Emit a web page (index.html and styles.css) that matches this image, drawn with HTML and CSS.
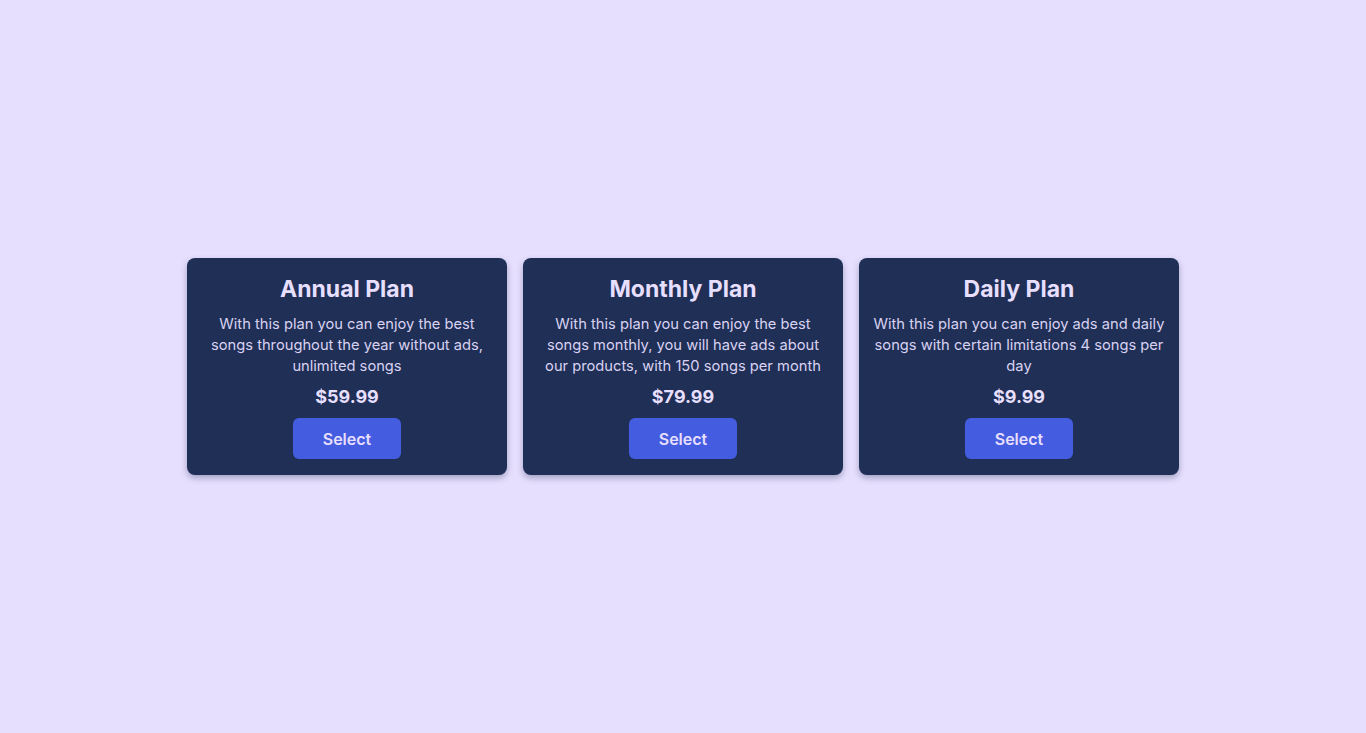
FILE: index.html
```html
<!DOCTYPE html>
<html lang="en">
<head>
<meta charset="utf-8">
<title>Plans</title>
<link rel="stylesheet" href="styles.css">
</head>
<body>
<main class="plans">
  <section class="card">
    <h2 class="title">Annual Plan</h2>
    <p class="desc">With this plan you can enjoy the best songs throughout the year without ads, unlimited songs</p>
    <p class="price">$59.99</p>
    <button class="btn">Select</button>
  </section>
  <section class="card">
    <h2 class="title">Monthly Plan</h2>
    <p class="desc">With this plan you can enjoy the best songs monthly, you will have ads about our products, with 150 songs per month</p>
    <p class="price">$79.99</p>
    <button class="btn">Select</button>
  </section>
  <section class="card">
    <h2 class="title">Daily Plan</h2>
    <p class="desc">With this plan you can enjoy ads and daily songs with certain limitations 4 songs per day</p>
    <p class="price">$9.99</p>
    <button class="btn">Select</button>
  </section>
</main>
</body>
</html>
```
FILE: styles.css
```css
* { box-sizing: border-box; }
html, body { margin: 0; height: 100%; }
body {
  background: #e7dffe;
  font-family: "Inter", "Open Sans", sans-serif;
  display: flex;
  align-items: center;
  justify-content: center;
}
.plans {
  display: flex;
  gap: 16px;
}
.card {
  width: 320px;
  background: #1f2f56;
  border-radius: 8px;
  box-shadow: 0 3px 6px rgba(31, 47, 86, 0.35);
  color: #e7dffe;
  text-align: center;
  padding: 16px 12px;
  display: flex;
  flex-direction: column;
  align-items: center;
}
.title {
  margin: 0;
  font-size: 23px;
  line-height: 30px;
  font-weight: 700;
}
.desc {
  margin: 10px 0 0;
  font-size: 14.7px;
  line-height: 21px;
  font-weight: 400;
  color: #d9d2f2;
}
.price {
  margin: 8px 0 0;
  font-size: 18px;
  line-height: 24px;
  font-weight: 700;
}
.btn {
  flex-shrink: 0;
  margin-top: 9px;
  width: 108px;
  height: 41px;
  border: none;
  border-radius: 6px;
  background: #445de0;
  color: #e7dffe;
  font-family: inherit;
  font-size: 16px;
  font-weight: 600;
}
```
